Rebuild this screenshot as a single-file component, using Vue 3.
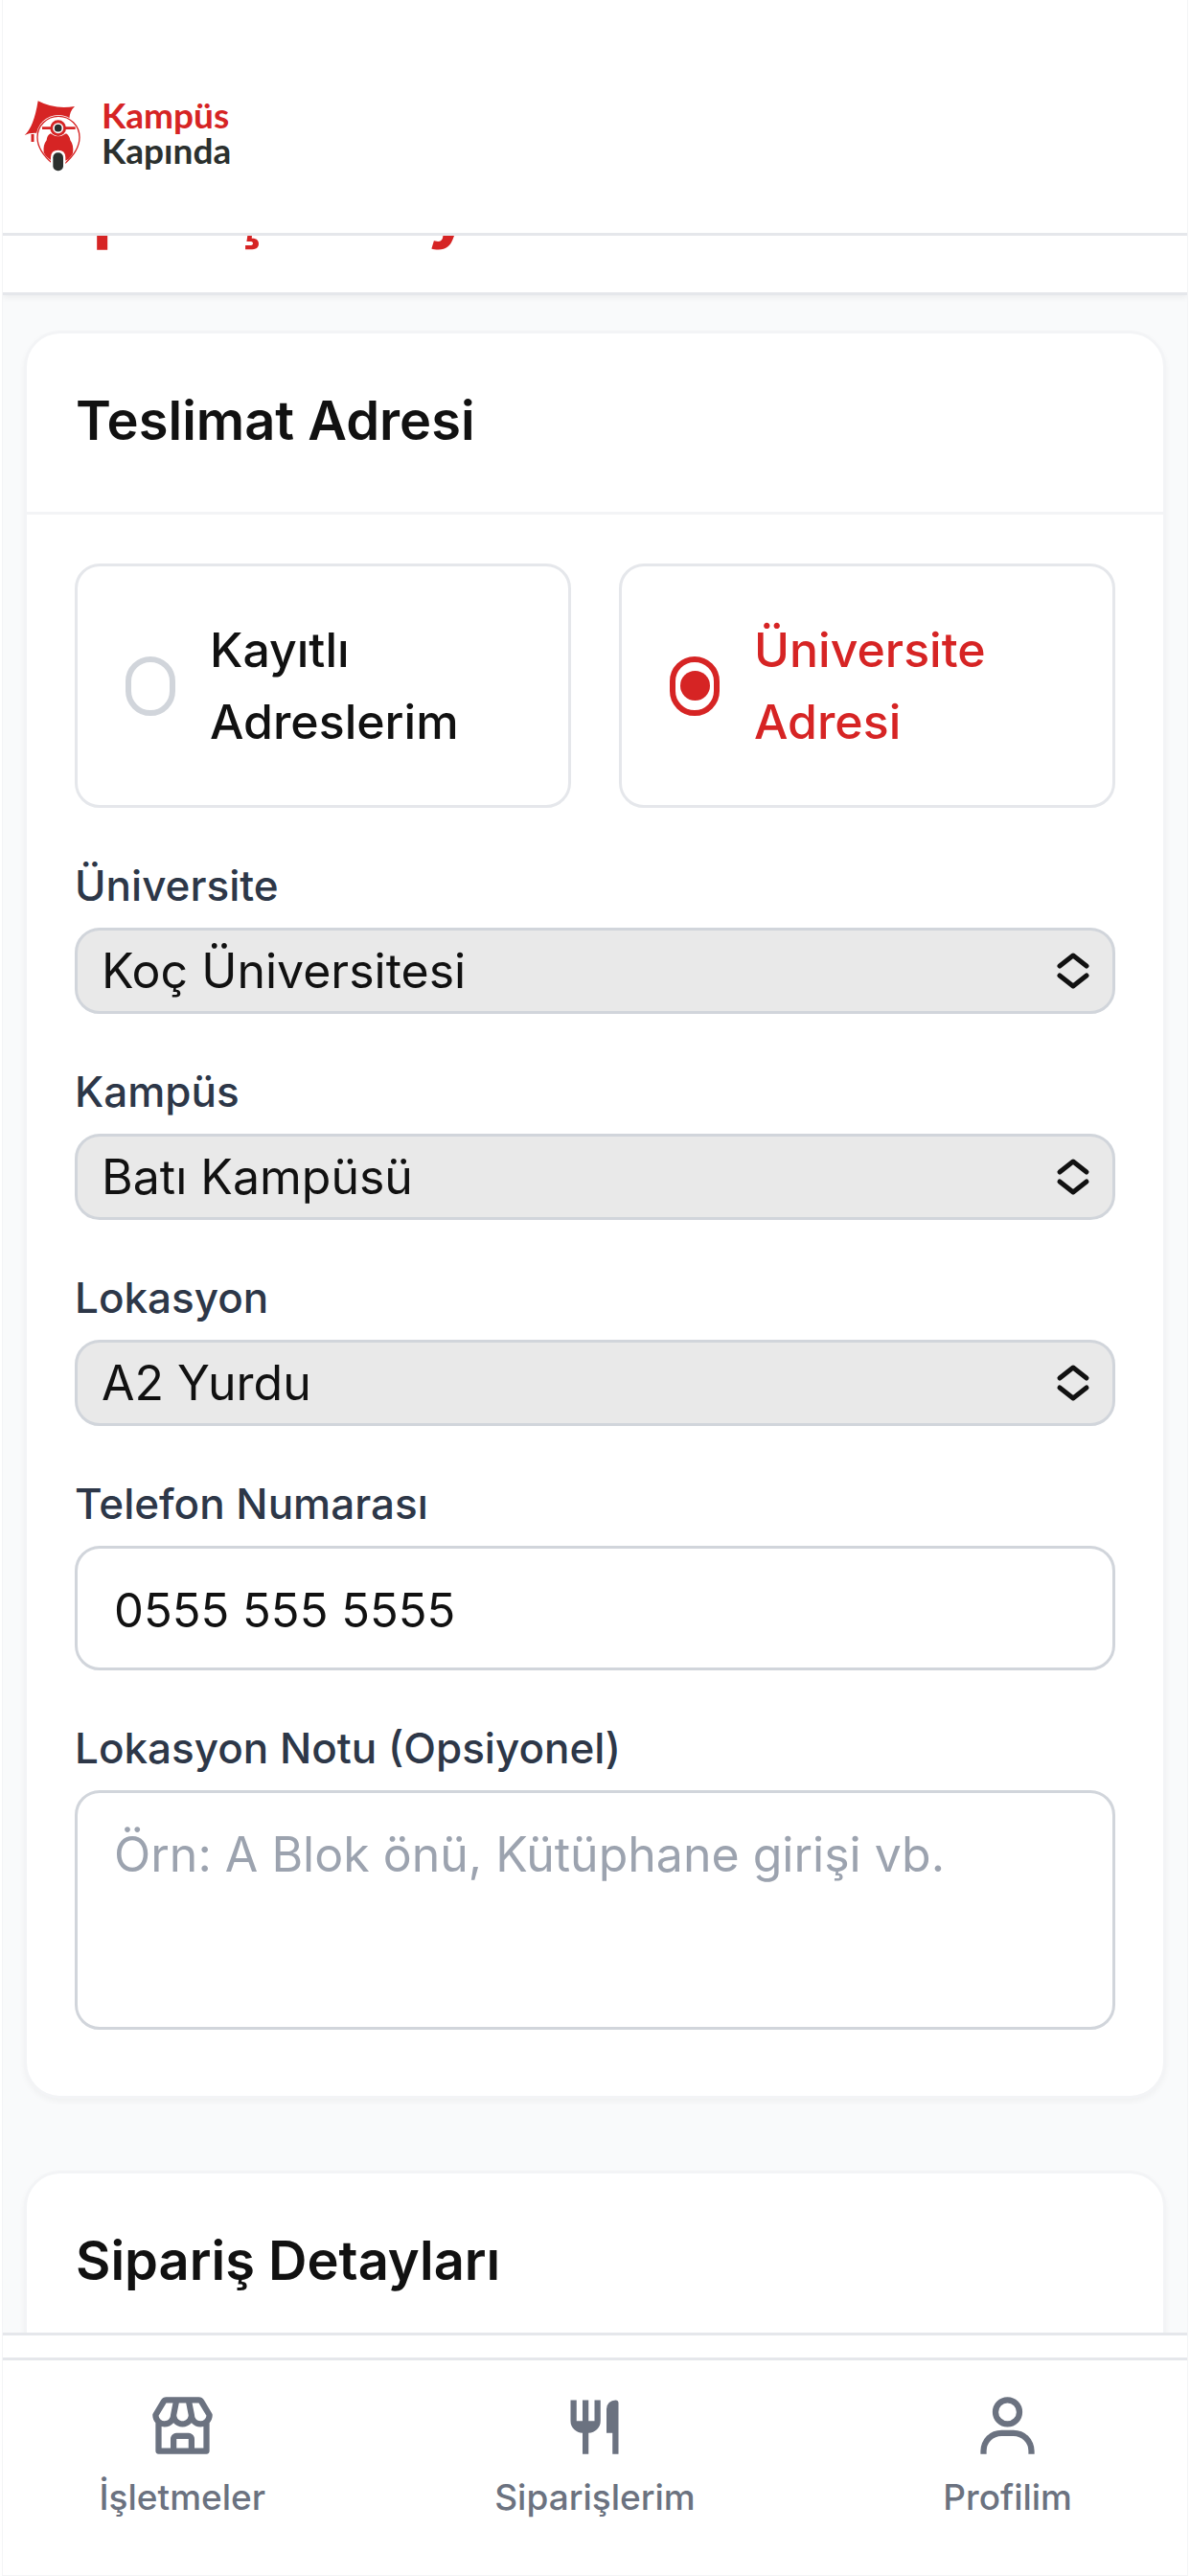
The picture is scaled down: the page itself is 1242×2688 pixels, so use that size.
<script setup>
import { ref } from 'vue'

const addressType = ref('university')
const addressTypes = [
  { value: 'saved', label: 'Kayıtlı Adreslerim' },
  { value: 'university', label: 'Üniversite Adresi' },
]

const selects = ref([
  { id: 'university', label: 'Üniversite', value: 'Koç Üniversitesi' },
  { id: 'campus', label: 'Kampüs', value: 'Batı Kampüsü' },
  { id: 'location', label: 'Lokasyon', value: 'A2 Yurdu' },
])

const phone = ref('0555 555 5555')
const note = ref('')

const navItems = [
  {
    label: 'İşletmeler',
    icon: 'M21.999 8a.997.997 0 0 0-.143-.515L19.147 2.97A2.01 2.01 0 0 0 17.433 2H6.565c-.698 0-1.355.37-1.714.971L2.142 7.485A.997.997 0 0 0 1.999 8c0 1.005.386 1.914 1 2.618V20a1 1 0 0 0 1 1h16a1 1 0 0 0 1-1v-9.382c.614-.704 1-1.613 1-2.618zm-2.016.251A2.002 2.002 0 0 1 17.999 10c-1.103 0-2-.897-2-2 0-.068-.025-.128-.039-.192l.02-.004L15.218 4h2.214l2.551 4.251zm-9.977-.186L10.818 4h2.361l.813 4.065C13.958 9.137 13.08 10 11.999 10s-1.959-.863-1.993-1.935zM6.565 4h2.214l-.76 3.804.02.004c-.015.064-.04.124-.04.192 0 1.103-.897 2-2 2a2.002 2.002 0 0 1-1.984-1.749L6.565 4zm3.434 15v-3h4v3h-4zm6 0v-3c0-1.103-.897-2-2-2h-4c-1.103 0-2 .897-2 2v3h-3v-7.142c.321.083.652.142 1 .142a3.99 3.99 0 0 0 3-1.357c.733.832 1.807 1.357 3 1.357s2.267-.525 3-1.357A3.99 3.99 0 0 0 17.999 12c.348 0 .679-.059 1-.142V19h-3z',
  },
  {
    label: 'Siparişlerim',
    icon: 'M8 21v-7a4 4 0 0 1-4-4V3h2v7h2V3h2v7h2V3h2v7a4 4 0 0 1-4 4v7zM19 3a1 1 0 0 1 1 1v17h-2v-7h-2V6a3 3 0 0 1 3-3z',
  },
  {
    label: 'Profilim',
    icon: 'M12 2a5 5 0 1 0 5 5 5 5 0 0 0-5-5zm0 8a3 3 0 1 1 3-3 3 3 0 0 1-3 3zm9 11v-1a7 7 0 0 0-7-7h-4a7 7 0 0 0-7 7v1h2v-1a5 5 0 0 1 5-5h4a5 5 0 0 1 5 5v1z',
  },
]
</script>

<template>
  <div class="app">
    <header class="topbar">
      <a class="brand" href="#">
        <svg class="brand-mark" viewBox="72 69 180 234" aria-hidden="true">
          <path
            d="M119 76Q172 104 234 93Q218 108 217 132L205 150L130 178Q98 172 77 183Q106 158 119 76z"
            fill="#d62424"
          />
          <path d="M102 180v24" stroke="#d62424" stroke-width="9" />
          <circle cx="183" cy="190" r="70" fill="#fff" />
          <path
            d="M167 274C135 248 117 218 117 190A66 66 0 0 1 249 190C249 218 231 248 201 274"
            fill="none"
            stroke="#d62424"
            stroke-width="4"
          />
          <path d="M132 161h104" stroke="#d62424" stroke-width="8" />
          <path
            d="M158 178Q182 196 207 178Q218 185 220 199Q232 215 228 240Q216 262 201 264L166 264Q146 256 137 238Q134 214 146 199Q147 184 158 178z"
            fill="#d62424"
          />
          <circle cx="182" cy="161" r="25" fill="#d62424" />
          <circle cx="182" cy="161" r="14" fill="#2b302e" stroke="#fff" stroke-width="5" />
          <path d="M159 278V252Q160 230 182 230Q204 230 205 252V278z" fill="#fff" />
          <rect x="166" y="238" width="32" height="57" rx="15" fill="#2b302e" />
        </svg>
        <span class="brand-name">
          <span class="brand-first">Kampüs</span>
          <span>Kapında</span>
        </span>
      </a>
    </header>

    <main class="content">
      <div class="page-title">
        <h1>Sipariş Onayı</h1>
      </div>

      <div class="cards">
        <section class="card">
          <h2 class="card-title">Teslimat Adresi</h2>
          <form class="card-body" @submit.prevent>
            <div class="options">
              <label
                v-for="type in addressTypes"
                :key="type.value"
                class="option"
                :class="{ selected: addressType === type.value }"
              >
                <input v-model="addressType" type="radio" name="address-type" :value="type.value" />
                <span>{{ type.label }}</span>
              </label>
            </div>

            <div v-for="field in selects" :key="field.id" class="field">
              <label :for="field.id">{{ field.label }}</label>
              <div class="select-wrap">
                <select :id="field.id" v-model="field.value">
                  <option>{{ field.value }}</option>
                </select>
                <svg class="chevrons" viewBox="0 0 36 40" aria-hidden="true">
                  <path d="M4 15L18 4L32 15M4 25L18 36L32 25" />
                </svg>
              </div>
            </div>

            <div class="field">
              <label for="phone">Telefon Numarası</label>
              <input id="phone" v-model="phone" class="control phone" type="tel" />
            </div>

            <div class="field">
              <label for="note">Lokasyon Notu (Opsiyonel)</label>
              <textarea
                id="note"
                v-model="note"
                class="control note"
                placeholder="Örn: A Blok önü, Kütüphane girişi vb."
              ></textarea>
            </div>
          </form>
        </section>

        <section class="card">
          <h2 class="card-title">Sipariş Detayları</h2>
          <div class="card-body"></div>
        </section>
      </div>
    </main>

    <div class="action-bar"></div>
    <nav class="bottom-nav">
      <a v-for="item in navItems" :key="item.label" href="#">
        <svg viewBox="0 0 24 24" aria-hidden="true"><path :d="item.icon" /></svg>
        <span>{{ item.label }}</span>
      </a>
    </nav>
  </div>
</template>

<style>
body {
  margin: 0;
  background: #fff;
}
</style>

<style scoped>
* {
  box-sizing: border-box;
}

.app {
  display: flex;
  flex-direction: column;
  height: 100vh;
  margin: 0 2px;
  border: solid #f3f4f6;
  border-width: 0 1px 1px;
  background: #fff;
  color: #111;
  font-family: Inter, "Liberation Sans", sans-serif;
}

.topbar {
  flex: none;
  padding: 101px 21px 60px;
  border-bottom: 3px solid #e5e7eb;
}

.brand {
  display: flex;
  align-items: center;
  gap: 22px;
  width: max-content;
  color: #2b302e;
  text-decoration: none;
}

.brand-mark {
  width: 60px;
  height: 78px;
}

.brand-name {
  display: flex;
  flex-direction: column;
  padding-bottom: 8px;
  font: 700 37px/37px Lato, sans-serif;
}

.brand-first {
  color: #d62424;
}

.content {
  flex: 1;
  min-height: 0;
  overflow: hidden;
  background: #f9fafb;
}

/* Scrolled partly beneath the top bar */
.page-title {
  margin-top: -115px;
  padding: 39px 24px;
  border-bottom: 3px solid #e5e7eb;
  background: #fff;
  box-shadow: 0 3px 6px rgba(0, 0, 0, 0.05);
}

h1 {
  margin: 0;
  color: #d62424;
  font-size: 75px;
  font-weight: 700;
  line-height: 96px;
}

.cards {
  display: flex;
  flex-direction: column;
  gap: 75px;
  padding: 37px 22px;
}

.card {
  border: 3px solid #f3f4f6;
  border-radius: 38px;
  background: #fff;
  box-shadow: 0 3px 6px rgba(0, 0, 0, 0.04);
}

.card-title {
  margin: 0;
  padding: 47px 51px 50px;
  border-bottom: 3px solid #f3f4f6;
  font-size: 56px;
  font-weight: 600;
  line-height: 89px;
}

.card-body {
  display: flex;
  flex-direction: column;
  gap: 50px;
  padding: 51px 50px 69px;
}

.options {
  display: grid;
  grid-template-columns: 1fr 1fr;
  gap: 50px;
}

.option {
  display: flex;
  align-items: center;
  gap: 36px;
  min-height: 255px;
  padding: 48px 50px;
  border: 3px solid #e5e7eb;
  border-radius: 26px;
  font-size: 50px;
  font-weight: 500;
  line-height: 75px;
}

.option input {
  display: grid;
  flex: none;
  place-content: center;
  width: 52px;
  height: 62px;
  margin: 0;
  border: 6px solid #d1d5db;
  border-radius: 26px;
  appearance: none;
}

.option.selected {
  color: #d62424;
}

.option.selected input {
  border-color: #d62424;
}

.option.selected input::before {
  width: 31px;
  height: 31px;
  border-radius: 50%;
  background: #d62424;
  content: "";
}

.field {
  display: flex;
  flex-direction: column;
  gap: 12px;
}

.field label {
  color: #2d3748;
  font-size: 44px;
  font-weight: 500;
  line-height: 63px;
}

.select-wrap {
  display: grid;
  align-items: center;
}

.select-wrap > * {
  grid-area: 1 / 1;
}

select,
.control {
  width: 100%;
  margin: 0;
  border: 3px solid #d1d5db;
  border-radius: 26px;
  color: #111;
  font: 400 50px/76px Inter, "Liberation Sans", sans-serif;
}

select {
  height: 90px;
  padding: 0 76px 0 25px;
  background: #e9e9e9;
  line-height: 84px;
  appearance: none;
}

.chevrons {
  justify-self: end;
  width: 36px;
  height: 40px;
  margin-right: 26px;
  fill: none;
  stroke: #111;
  stroke-width: 5;
  stroke-linecap: round;
  stroke-linejoin: round;
  pointer-events: none;
}

.control {
  height: 130px;
  padding: 26px 38px 22px;
  background: #fff;
}

.phone {
  font-size: 49px;
}

.note {
  display: block;
  height: 250px;
  resize: none;
}

.note::placeholder {
  color: #9ca3af;
  opacity: 1;
}

.action-bar {
  flex: none;
  height: 26px;
  border-top: 3px solid #e5e7eb;
}

.bottom-nav {
  display: grid;
  flex: none;
  grid-template-columns: repeat(3, 1fr);
  column-gap: 104px;
  padding: 32px 24px 56px;
  border-top: 3px solid #e5e7eb;
}

.bottom-nav a {
  display: flex;
  flex-direction: column;
  align-items: center;
  gap: 10px;
  color: #6b7280;
  font-size: 37px;
  font-weight: 500;
  line-height: 51px;
  text-decoration: none;
}

.bottom-nav svg {
  width: 75px;
  height: 75px;
  fill: currentColor;
}
</style>
